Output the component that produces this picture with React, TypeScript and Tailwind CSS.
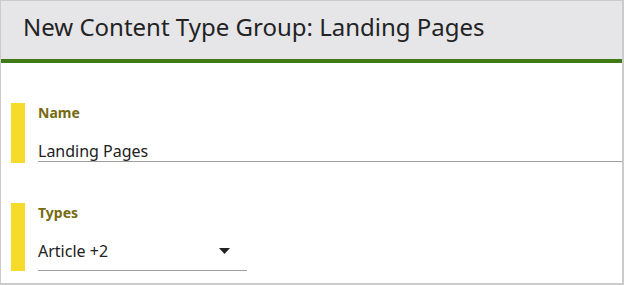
export default function App() {
  return (
    <div
      className="w-[624px] h-[285px] bg-white border-t border-l border-r-2 border-b-2 border-[#cbcbcb] overflow-hidden"
      style={{ fontFamily: '"Noto Sans", "Open Sans", sans-serif' }}
    >
      {/* Header */}
      <div className="h-[62px] bg-[#e6e6e9] border-b-4 border-[#3f7a14] flex items-center pl-[22px] pb-[6px]">
        <h1 className="text-[24px] leading-[28px] text-[#232323] font-normal">
          New Content Type Group: Landing Pages
        </h1>
      </div>

      <div className="pt-[40px] pl-[10px] flex flex-col gap-[40px]">
        {/* Name field */}
        <div className="flex items-start">
          <div className="w-[14px] h-[60px] bg-[#f6db2b] shrink-0" />
          <div className="ml-[13px] flex-1 pt-[2px]">
            <div className="text-[14px] leading-[16px] font-bold text-[#776a10]">Name</div>
            <div className="mt-[20px] h-[21px] border-b border-[#9e9e9e] text-[16px] leading-[20px] text-[#222]">
              Landing Pages
            </div>
          </div>
        </div>

        {/* Types field */}
        <div className="flex items-start">
          <div className="w-[14px] h-[68px] bg-[#f6db2b] shrink-0" />
          <div className="ml-[13px] pt-[2px]">
            <div className="text-[14px] leading-[16px] font-bold text-[#776a10]">Types</div>
            <div className="mt-[20px] w-[209px] h-[30px] border-b border-[#a0a0a0] flex items-start justify-between pr-[17px]">
              <span className="text-[16px] leading-[20px] text-[#222]">Article +2</span>
              <svg width="11" height="6" viewBox="0 0 11 6" className="mt-[7px]">
                <path d="M0 0 L11 0 L5.5 6 Z" fill="#222" />
              </svg>
            </div>
          </div>
        </div>
      </div>
    </div>
  )
}
